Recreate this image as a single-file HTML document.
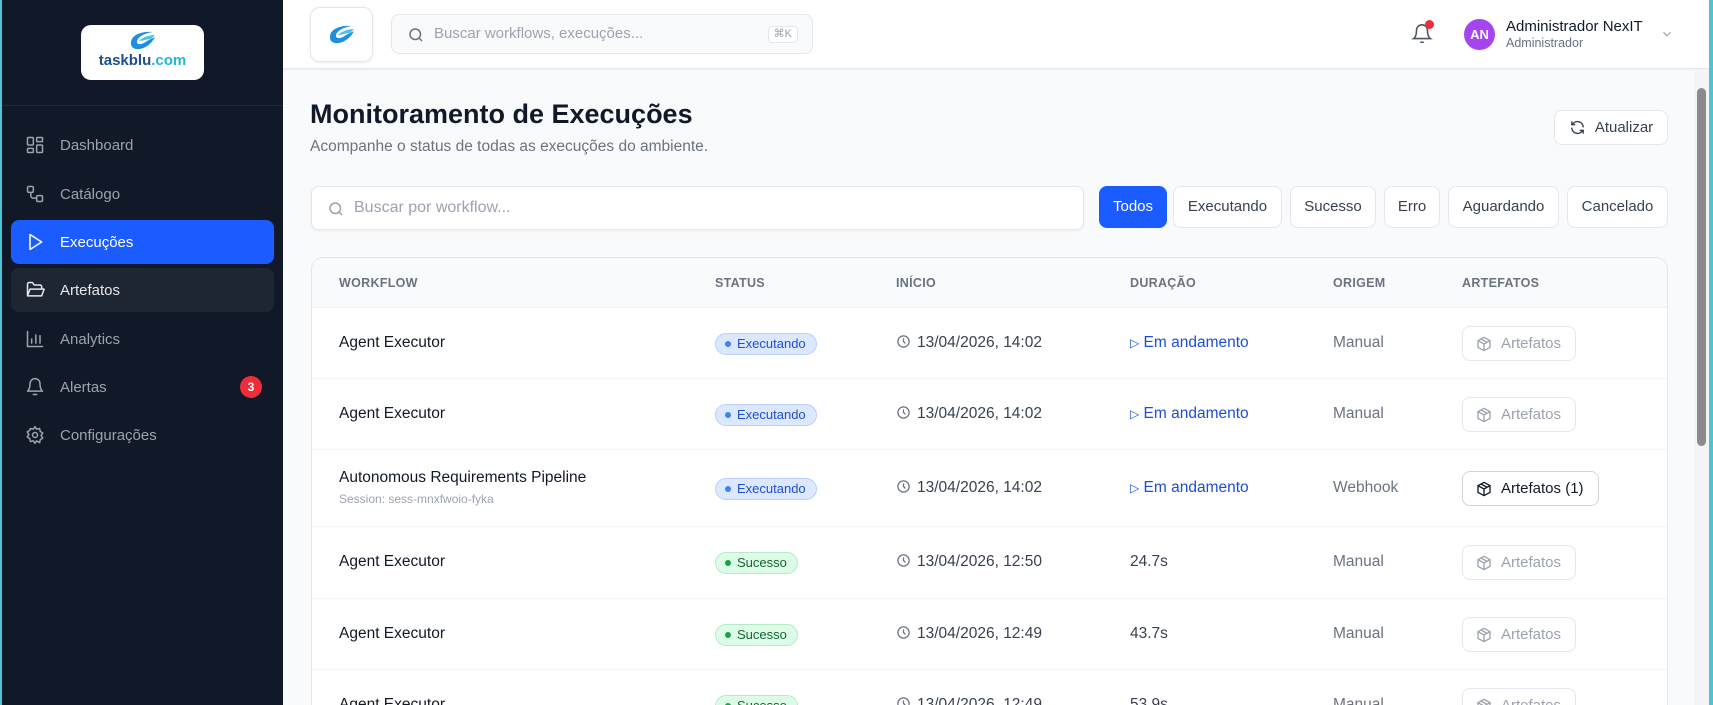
<!DOCTYPE html>
<html><head><meta charset="utf-8"><style>
*{box-sizing:border-box;margin:0;padding:0}
html{width:1713px;height:705px;overflow:hidden}
body{width:1713px;height:705px;overflow:hidden;font-family:"Liberation Sans",sans-serif;background:#f8fafc;position:relative;color:#111827}
.edgeL{position:absolute;left:0;top:0;width:2px;height:705px;background:#4fc3d6;z-index:5}
.edgeR{position:absolute;right:0;top:0;width:4px;height:705px;background:#4fc3d6;z-index:5}
.side{position:absolute;left:0;top:0;width:283px;height:705px;background:#111827}
.logo{position:absolute;left:81px;top:25px;width:123px;height:55px;background:#fff;border-radius:10px;text-align:center}
.logo .t{position:absolute;top:27px;left:0;right:0;font-weight:bold;font-size:15px;color:#1e4e8c}
.logo .t span{color:#22b5d4}
.div{position:absolute;left:0;top:105px;width:283px;height:1px;background:#1f2937}
.nav{position:absolute;left:11px;width:263px;height:44px;border-radius:8px;color:#9ca3af;font-size:15px;display:flex;align-items:center;padding-left:14px}
.nav svg{width:20px;height:20px;margin-right:15px;fill:none;stroke:currentColor;stroke-width:1.8;stroke-linecap:round;stroke-linejoin:round}
.nav.act{background:#1a5cff;color:#fff}
.nav.hov{background:#1f2633;color:#e5e7eb}
.badge{position:absolute;right:12px;width:22px;height:22px;border-radius:50%;background:#ef2d3a;color:#fff;font-size:12px;font-weight:bold;text-align:center;line-height:22px}
.top{position:absolute;left:283px;top:0;width:1426px;height:69px;background:#fff;border-bottom:1px solid #e5e7eb;box-shadow:0 1px 2px rgba(0,0,0,.05)}
.tlogo{position:absolute;left:27px;top:7px;width:63px;height:55px;border:1px solid #e5e7eb;border-radius:10px;background:#fff;box-shadow:0 1px 3px rgba(0,0,0,.08)}
.tsearch{position:absolute;left:108px;top:14px;width:422px;height:40px;border:1px solid #e5e7eb;border-radius:8px;background:#f9fafb;color:#9ca3af;font-size:15px;padding-left:42px;line-height:38px}
.kbd{position:absolute;right:14px;top:11px;height:17px;border:1px solid #e5e7eb;border-radius:4px;font-size:11px;line-height:15px;padding:0 5px;color:#9ca3af;background:#fff}
.main{position:absolute;left:283px;top:69px;width:1411px;height:636px;overflow:hidden}
h1{position:absolute;left:27px;top:30px;font-size:27px;font-weight:bold;color:#111827}
.sub{position:absolute;left:27px;top:69px;font-size:15.5px;color:#6b7280}
.btn{position:absolute;border:1px solid #e5e7eb;border-radius:8px;background:#fff;font-size:15px;color:#374151;text-align:center}
.search{position:absolute;left:28px;top:117px;width:773px;height:44px;background:#fff;border:1px solid #e5e7eb;border-radius:8px;box-shadow:0 1px 3px rgba(0,0,0,.06);font-size:16px;color:#9ca3af;line-height:42px;padding-left:42px}
.card{position:absolute;left:28px;top:188px;width:1357px;height:448px;background:#fff;border:1px solid #e5e7eb;border-bottom:none;border-radius:12px 12px 0 0;overflow:hidden}
.th{position:absolute;top:0;left:0;right:0;height:50px;background:#f9fafb;border-bottom:1px solid #eef0f3}
.th span{position:absolute;top:18px;font-size:12.5px;font-weight:bold;color:#6b7280;letter-spacing:.3px}
.row{position:absolute;left:0;right:0;border-bottom:1px solid #f1f3f5}
.c{position:absolute;font-size:15.5px}
.pill{position:absolute;height:22px;border-radius:11px;font-size:13px;line-height:20px;padding:0 10px 0 21px}
.pill:before{content:"";position:absolute;left:9px;top:7px;width:6px;height:6px;border-radius:50%}
.run{background:#dbe8ff;border:1px solid #b9d0fb;color:#1d4ed8}.run:before{background:#3b82f6}
.ok{background:#dcfce7;border:1px solid #b5ebc8;color:#166534}.ok:before{background:#16a34a}
.art{position:absolute;height:35px;border:1px solid #e5e7eb;border-radius:8px;font-size:15px;line-height:33px;padding:0 14px 0 38px;color:#9ca3af}
.art svg{position:absolute;left:13px;top:9px}
.art.on{border-color:#d1d5db;color:#111827}
</style></head><body>
<div class="edgeL"></div><div class="edgeR"></div>
<div class="side">
 <div class="logo">
  <svg width="36" height="24" viewBox="0 0 36 24" style="position:absolute;left:44px;top:4px"><path d="M6 14 C6 6 16 2 28 3 C20 4 12 8 12 13 C12 16 17 16 22 12 L30 8 C26 16 18 21 11 20 C7 19 6 17 6 14Z" fill="#1d8fe0"/><path d="M14 12 C18 8 24 6 30 6 L26 10 C22 10 18 12 14 12Z" fill="#4fc3e6"/></svg>
  <div class="t">taskblu<span>.com</span></div>
 </div>
 <div class="div"></div>
 <div class="nav" style="top:123px"><svg viewBox="0 0 24 24"><rect x="3" y="3" width="7" height="9" rx="1"/><rect x="14" y="3" width="7" height="5" rx="1"/><rect x="14" y="12" width="7" height="9" rx="1"/><rect x="3" y="16" width="7" height="5" rx="1"/></svg>Dashboard</div>
 <div class="nav" style="top:172px"><svg viewBox="0 0 24 24"><rect x="3" y="3" width="7" height="7" rx="1.5"/><rect x="14" y="14" width="7" height="7" rx="1.5"/><path d="M7 10v4a3 3 0 0 0 3 3h4"/></svg>Catálogo</div>
 <div class="nav act" style="top:220px"><svg viewBox="0 0 24 24"><path d="M6 3l14 9-14 9z"/></svg>Execuções</div>
 <div class="nav hov" style="top:268px"><svg viewBox="0 0 24 24"><path d="M3 19V5a2 2 0 0 1 2-2h4l2 3h7a2 2 0 0 1 2 2v2M3 19l3-8h17l-3 8z"/></svg>Artefatos</div>
 <div class="nav" style="top:317px"><svg viewBox="0 0 24 24"><path d="M3 3v18h18M8 17v-5M13 17V7M18 17v-9"/></svg>Analytics</div>
 <div class="nav" style="top:365px"><svg viewBox="0 0 24 24"><path d="M6 8a6 6 0 0 1 12 0c0 7 3 9 3 9H3s3-2 3-9M10 21h4"/></svg>Alertas<div class="badge">3</div></div>
 <div class="nav" style="top:413px"><svg viewBox="0 0 24 24"><circle cx="12" cy="12" r="3"/><path d="M12 2l2 3 3.5-.8.8 3.5 3 2-2 3 2 3-3 2-.8 3.5L14 19l-2 3-2-3-3.5.8L5.7 16.3l-3-2 2-3-2-3 3-2L6.5 4.2 10 5z"/></svg>Configurações</div>
</div>
<div class="top">
 <div class="tlogo"><svg width="36" height="24" viewBox="0 0 36 24" style="position:absolute;left:13px;top:15px"><path d="M6 14 C6 6 16 2 28 3 C20 4 12 8 12 13 C12 16 17 16 22 12 L30 8 C26 16 18 21 11 20 C7 19 6 17 6 14Z" fill="#1d8fe0"/><path d="M14 12 C18 8 24 6 30 6 L26 10 C22 10 18 12 14 12Z" fill="#4fc3e6"/></svg></div>
 <div class="tsearch"><svg width="18" height="18" viewBox="0 0 24 24" style="position:absolute;left:15px;top:11px" fill="none" stroke="#6b7280" stroke-width="2"><circle cx="11" cy="11" r="7"/><path d="M20 20l-4-4"/></svg>Buscar workflows, execuções...<span class="kbd">⌘K</span></div>
 <svg width="22" height="22" viewBox="0 0 24 24" style="position:absolute;left:1128px;top:23px" fill="none" stroke="#4b5563" stroke-width="1.7"><path d="M6 8a6 6 0 0 1 12 0c0 7 3 9 3 9H3s3-2 3-9M10 21h4"/></svg>
 <div style="position:absolute;left:1142px;top:20px;width:9px;height:9px;border-radius:50%;background:#ef2d3a"></div>
 <div style="position:absolute;left:1181px;top:19px;width:31px;height:31px;border-radius:50%;background:#a445f0;color:#fff;font-size:13px;font-weight:bold;text-align:center;line-height:31px">AN</div>
 <div style="position:absolute;left:1223px;top:18px;font-size:15px;color:#111827">Administrador NexIT</div>
 <div style="position:absolute;left:1223px;top:36px;font-size:12.5px;color:#6b7280">Administrador</div>
 <svg width="14" height="14" viewBox="0 0 24 24" style="position:absolute;left:1377px;top:27px" fill="none" stroke="#9ca3af" stroke-width="2"><path d="M6 9l6 6 6-6"/></svg>
</div>
<div style="position:absolute;left:1694px;top:69px;width:15px;height:636px;background:#f3f4f6"></div>
<div style="position:absolute;left:1697px;top:88px;width:9px;height:358px;border-radius:5px;background:#8a8a8a"></div>
<div class="main">
 <h1>Monitoramento de Execuções</h1>
 <div class="sub">Acompanhe o status de todas as execuções do ambiente.</div>
 <div class="btn" style="left:1271px;top:41px;width:114px;height:35px;line-height:33px;padding-left:26px"><svg width="17" height="17" viewBox="0 0 24 24" style="position:absolute;left:14px;top:8px" fill="none" stroke="#374151" stroke-width="2" stroke-linecap="round"><path d="M20 11a8 8 0 0 0-14.5-4M4 4v4h4M4 13a8 8 0 0 0 14.5 4M20 20v-4h-4"/></svg>Atualizar</div>
 <div class="search"><svg width="18" height="18" viewBox="0 0 24 24" style="position:absolute;left:15px;top:13px" fill="none" stroke="#9ca3af" stroke-width="2"><circle cx="11" cy="11" r="7"/><path d="M20 20l-4-4"/></svg>Buscar por workflow...</div>
 <div class="btn" style="left:816px;top:117px;width:68px;height:42px;line-height:40px;background:#1a5cff;border-color:#1a5cff;color:#fff">Todos</div>
 <div class="btn" style="left:890px;top:117px;width:109px;height:42px;line-height:40px">Executando</div>
 <div class="btn" style="left:1007px;top:117px;width:86px;height:42px;line-height:40px">Sucesso</div>
 <div class="btn" style="left:1101px;top:117px;width:56px;height:42px;line-height:40px">Erro</div>
 <div class="btn" style="left:1165px;top:117px;width:111px;height:42px;line-height:40px">Aguardando</div>
 <div class="btn" style="left:1284px;top:117px;width:101px;height:42px;line-height:40px">Cancelado</div>
 <div class="card">
  <div class="th"><span style="left:27px">WORKFLOW</span><span style="left:403px">STATUS</span><span style="left:584px">INÍCIO</span><span style="left:818px">DURAÇÃO</span><span style="left:1021px">ORIGEM</span><span style="left:1150px">ARTEFATOS</span></div>
  <div class="row" style="top:50px;height:71px"><div class="c" style="left:27px;top:26px">Agent Executor</div><div class="pill run" style="left:403px;top:25px">Executando</div><div class="c" style="left:584px;top:26px;color:#374151"><svg width="15" height="15" viewBox="0 0 24 24" style="vertical-align:-2px;margin-right:6px" fill="none" stroke="#6b7280" stroke-width="2"><circle cx="12" cy="12" r="9"/><path d="M12 7v5l3 3"/></svg>13/04/2026, 14:02</div><div class="c" style="left:818px;top:26px;color:#1d4ed8"><span style="font-size:12px">▷</span> Em andamento</div><div class="c" style="left:1021px;top:26px;color:#6b7280">Manual</div><div class="art" style="left:1150px;top:18px"><svg width="16" height="16" viewBox="0 0 24 24" fill="none" stroke="#9ca3af" stroke-width="2"><path d="M12 2l9 5v10l-9 5-9-5V7zM3 7l9 5 9-5M12 12v10M7.5 4.5l9 5"/></svg>Artefatos</div></div>
  <div class="row" style="top:121px;height:71px"><div class="c" style="left:27px;top:26px">Agent Executor</div><div class="pill run" style="left:403px;top:25px">Executando</div><div class="c" style="left:584px;top:26px;color:#374151"><svg width="15" height="15" viewBox="0 0 24 24" style="vertical-align:-2px;margin-right:6px" fill="none" stroke="#6b7280" stroke-width="2"><circle cx="12" cy="12" r="9"/><path d="M12 7v5l3 3"/></svg>13/04/2026, 14:02</div><div class="c" style="left:818px;top:26px;color:#1d4ed8"><span style="font-size:12px">▷</span> Em andamento</div><div class="c" style="left:1021px;top:26px;color:#6b7280">Manual</div><div class="art" style="left:1150px;top:18px"><svg width="16" height="16" viewBox="0 0 24 24" fill="none" stroke="#9ca3af" stroke-width="2"><path d="M12 2l9 5v10l-9 5-9-5V7zM3 7l9 5 9-5M12 12v10M7.5 4.5l9 5"/></svg>Artefatos</div></div>
  <div class="row" style="top:192px;height:77px"><div class="c" style="left:27px;top:19px">Autonomous Requirements Pipeline</div><div class="c" style="left:27px;top:42px;font-size:12px;color:#9ca3af">Session: sess-mnxfwoio-fyka</div><div class="pill run" style="left:403px;top:28px">Executando</div><div class="c" style="left:584px;top:29px;color:#374151"><svg width="15" height="15" viewBox="0 0 24 24" style="vertical-align:-2px;margin-right:6px" fill="none" stroke="#6b7280" stroke-width="2"><circle cx="12" cy="12" r="9"/><path d="M12 7v5l3 3"/></svg>13/04/2026, 14:02</div><div class="c" style="left:818px;top:29px;color:#1d4ed8"><span style="font-size:12px">▷</span> Em andamento</div><div class="c" style="left:1021px;top:29px;color:#6b7280">Webhook</div><div class="art on" style="left:1150px;top:21px"><svg width="16" height="16" viewBox="0 0 24 24" fill="none" stroke="#111827" stroke-width="2"><path d="M12 2l9 5v10l-9 5-9-5V7zM3 7l9 5 9-5M12 12v10M7.5 4.5l9 5"/></svg>Artefatos (1)</div></div>
  <div class="row" style="top:269px;height:72px"><div class="c" style="left:27px;top:26px">Agent Executor</div><div class="pill ok" style="left:403px;top:25px">Sucesso</div><div class="c" style="left:584px;top:26px;color:#374151"><svg width="15" height="15" viewBox="0 0 24 24" style="vertical-align:-2px;margin-right:6px" fill="none" stroke="#6b7280" stroke-width="2"><circle cx="12" cy="12" r="9"/><path d="M12 7v5l3 3"/></svg>13/04/2026, 12:50</div><div class="c" style="left:818px;top:26px;color:#374151">24.7s</div><div class="c" style="left:1021px;top:26px;color:#6b7280">Manual</div><div class="art" style="left:1150px;top:18px"><svg width="16" height="16" viewBox="0 0 24 24" fill="none" stroke="#9ca3af" stroke-width="2"><path d="M12 2l9 5v10l-9 5-9-5V7zM3 7l9 5 9-5M12 12v10M7.5 4.5l9 5"/></svg>Artefatos</div></div>
  <div class="row" style="top:341px;height:71px"><div class="c" style="left:27px;top:26px">Agent Executor</div><div class="pill ok" style="left:403px;top:25px">Sucesso</div><div class="c" style="left:584px;top:26px;color:#374151"><svg width="15" height="15" viewBox="0 0 24 24" style="vertical-align:-2px;margin-right:6px" fill="none" stroke="#6b7280" stroke-width="2"><circle cx="12" cy="12" r="9"/><path d="M12 7v5l3 3"/></svg>13/04/2026, 12:49</div><div class="c" style="left:818px;top:26px;color:#374151">43.7s</div><div class="c" style="left:1021px;top:26px;color:#6b7280">Manual</div><div class="art" style="left:1150px;top:18px"><svg width="16" height="16" viewBox="0 0 24 24" fill="none" stroke="#9ca3af" stroke-width="2"><path d="M12 2l9 5v10l-9 5-9-5V7zM3 7l9 5 9-5M12 12v10M7.5 4.5l9 5"/></svg>Artefatos</div></div>
  <div class="row" style="top:412px;height:36px;border-bottom:none;overflow:hidden"><div class="c" style="left:27px;top:26px">Agent Executor</div><div class="pill ok" style="left:403px;top:25px">Sucesso</div><div class="c" style="left:584px;top:26px;color:#374151"><svg width="15" height="15" viewBox="0 0 24 24" style="vertical-align:-2px;margin-right:6px" fill="none" stroke="#6b7280" stroke-width="2"><circle cx="12" cy="12" r="9"/><path d="M12 7v5l3 3"/></svg>13/04/2026, 12:49</div><div class="c" style="left:818px;top:26px;color:#374151">53.9s</div><div class="c" style="left:1021px;top:26px;color:#6b7280">Manual</div><div class="art" style="left:1150px;top:18px"><svg width="16" height="16" viewBox="0 0 24 24" fill="none" stroke="#9ca3af" stroke-width="2"><path d="M12 2l9 5v10l-9 5-9-5V7zM3 7l9 5 9-5M12 12v10M7.5 4.5l9 5"/></svg>Artefatos</div></div>
 </div>
</div>
</body></html>
